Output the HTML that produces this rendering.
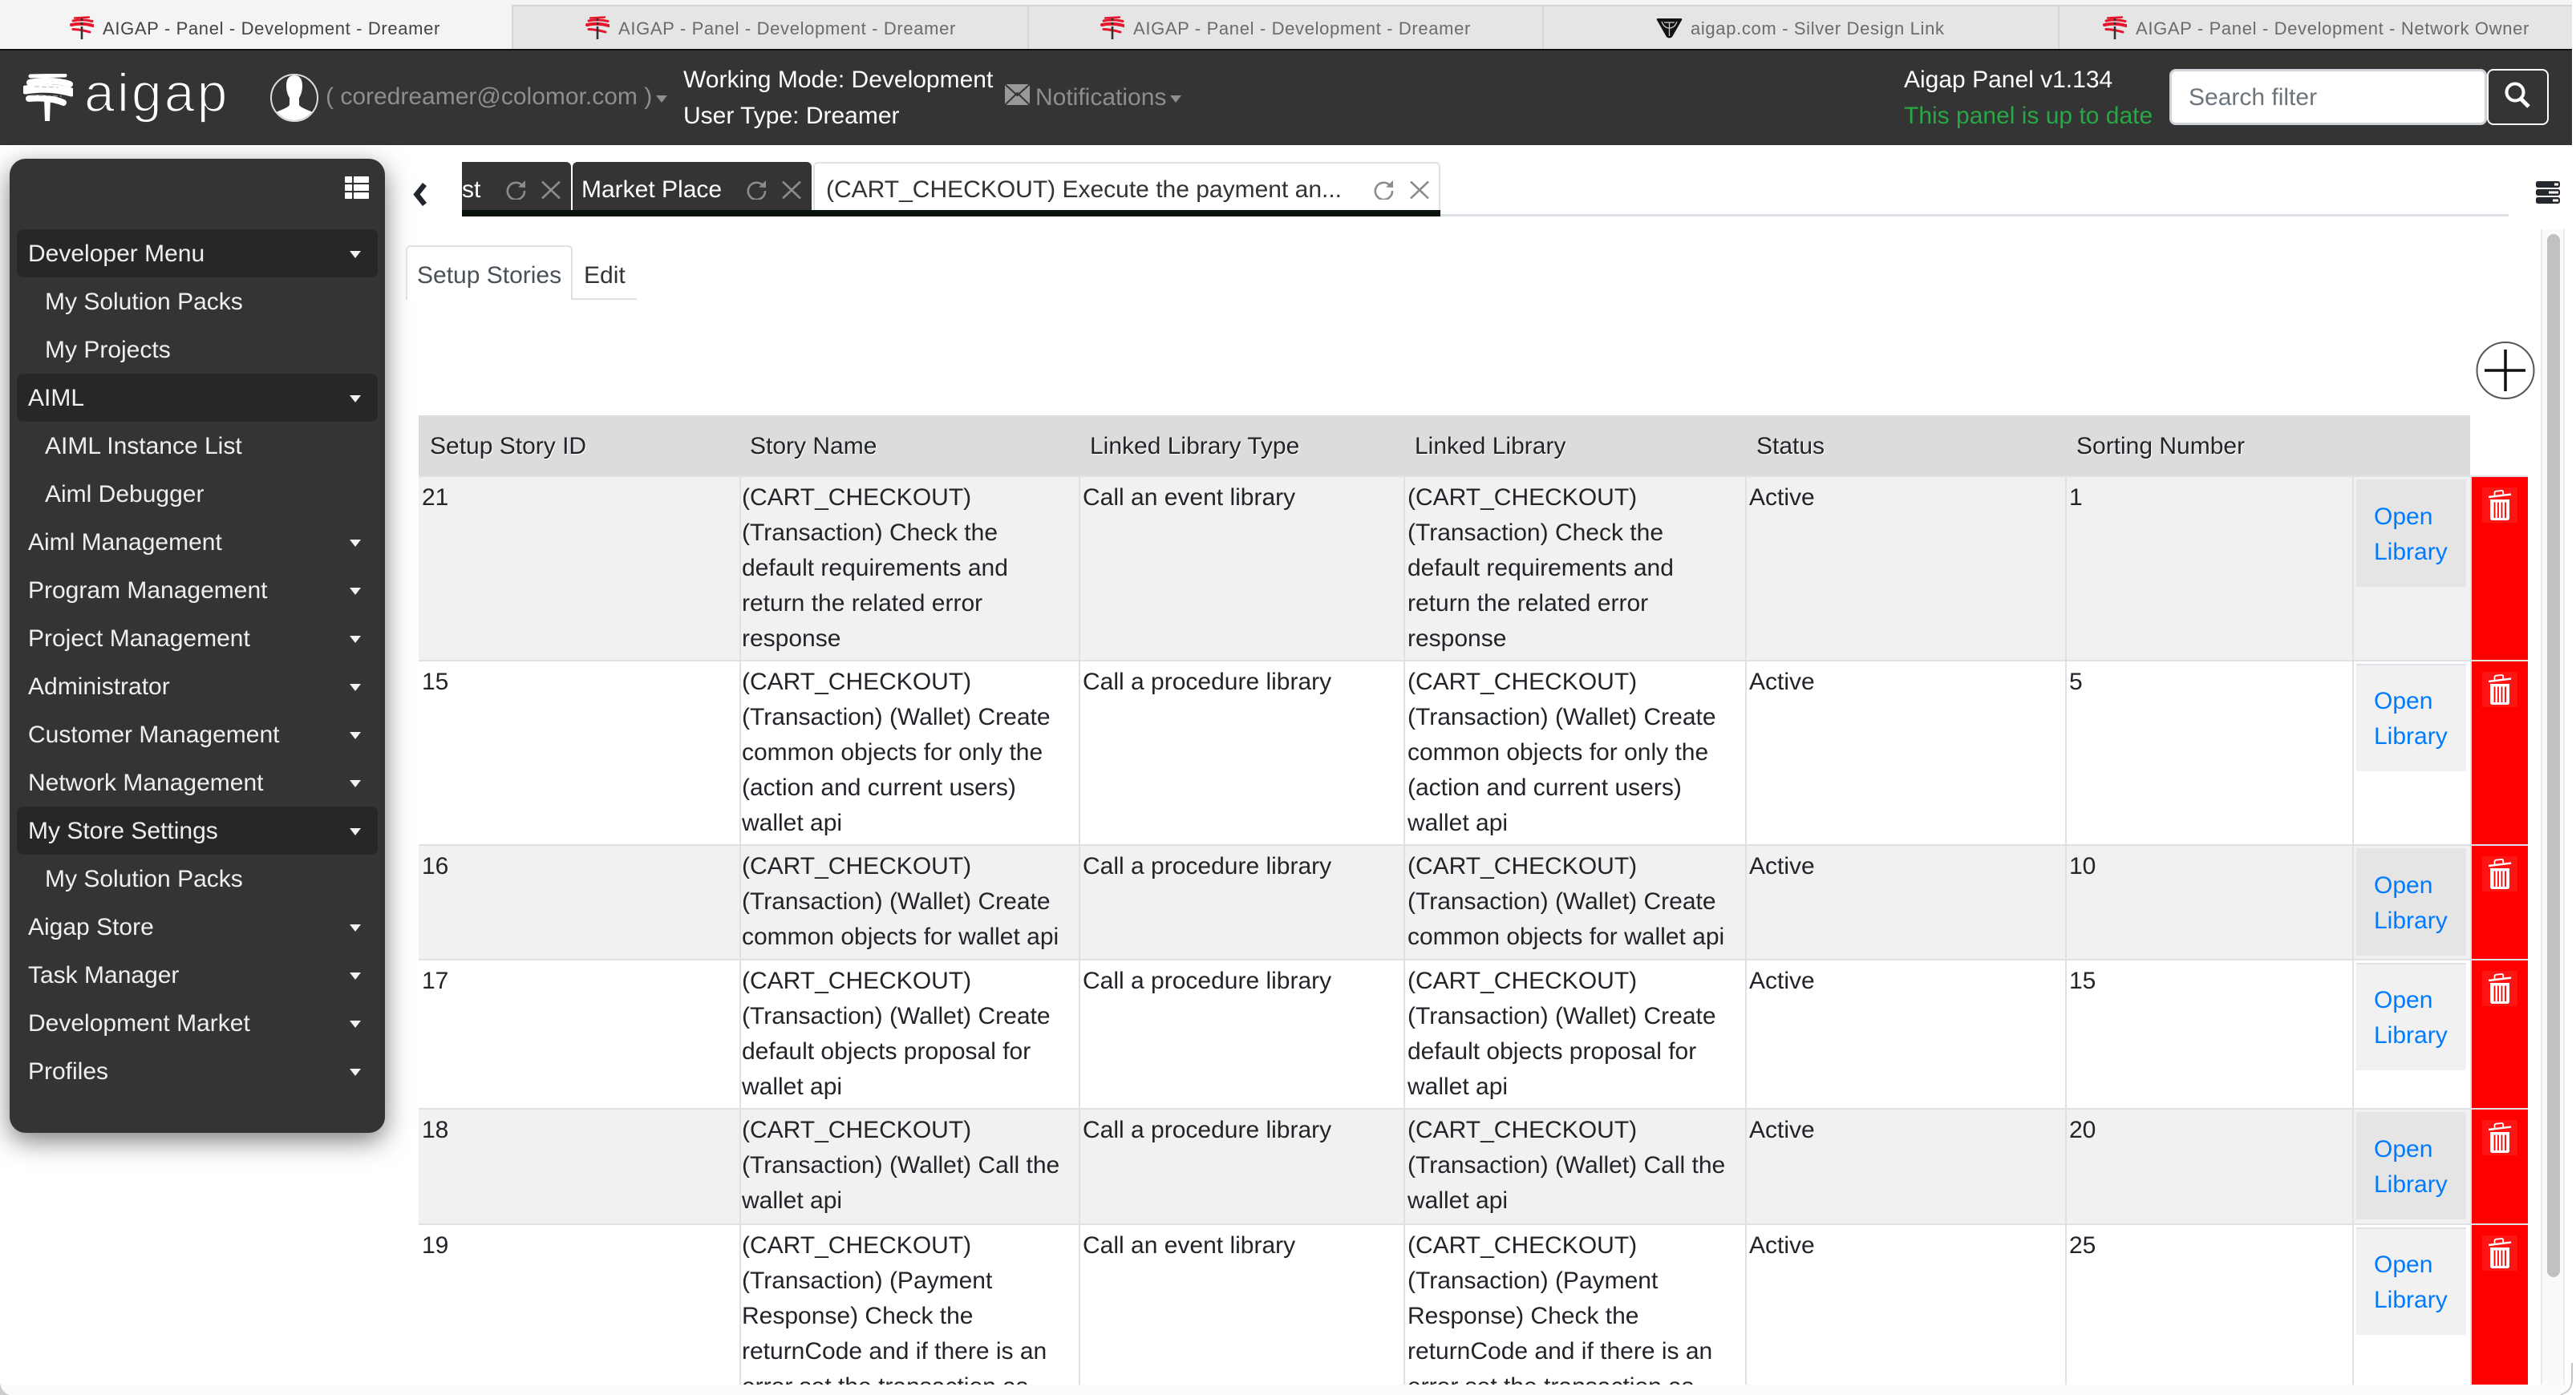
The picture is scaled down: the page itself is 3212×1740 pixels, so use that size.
<!DOCTYPE html>
<html lang="en"><head><meta charset="utf-8"><title>AIGAP - Panel - Development - Dreamer</title>
<style>
*{box-sizing:border-box}
html,body{margin:0;padding:0;width:3212px;height:1740px;overflow:hidden;background:#fff;font-family:"Liberation Sans",sans-serif;font-size:30px;color:#212529}
.a{position:absolute}
.t{position:absolute;white-space:nowrap;line-height:44px;margin-top:2px}
.tab{position:absolute;top:6px;height:56px;background:#e5e5e5;border-left:2px solid #d6d6d6;border-top:2px solid #d4d4d4}
.tt{position:absolute;top:21px;font-size:22px;letter-spacing:.65px;line-height:30px;white-space:nowrap;color:#6b6b6b}
.car{position:absolute;width:0;height:0;margin-top:2px;border-left:7.5px solid transparent;border-right:7.5px solid transparent;border-top:9px solid #f2f2f2}
.m{position:absolute;left:35px;white-space:nowrap;line-height:44px;color:#efefef;margin-top:2px}
.s{left:56px}
.hl{position:absolute;left:21px;width:450px;height:60px;background:#272727;border-radius:8px}
#tw{position:absolute;left:522px;top:518px;width:2630px;height:1209px;overflow:hidden}
table{border-collapse:separate;border-spacing:0;table-layout:fixed;width:2630px;line-height:44px}
th{font-weight:400;text-align:left;background:#dcdcdc;height:75px;padding:17px 0 0 14px;vertical-align:top;text-shadow:1px 1px 1px #fff;white-space:nowrap}
th:nth-child(2){padding-left:13px}
th.n{background:#fff}
td{vertical-align:top;border-top:2px solid #dee2e6;border-left:2px solid #dee2e6;padding:4px 0 0 3px;white-space:nowrap;overflow:hidden}
td:first-child{border-left:0;padding-left:4px}
td:nth-child(2){padding-left:1px}
tr.g td{background:#f1f1f1}
td.lb{padding:3px 5px 0 3px}
.b{display:block;height:134px;padding-top:25px;padding-left:22px;color:#007bff;background:#e5e5e5}
tr.w .b{background:#f1f1f1;border-top:2px solid #dee2e6;padding-top:23px}
tr td.rd,tr.g td.rd{background:#f00;padding:13px 0 0 13px}
.tb{display:block;width:44px;height:44px;background:#ff1414}
</style></head>
<body>
<svg width="0" height="0" style="position:absolute"><defs>
<symbol id="fav" viewBox="0 0 30 30"><g fill="none" stroke="#e5162c" stroke-linecap="round"><path d="M6 2.5 24 1.5" stroke-width="2.4"/><path d="M4 6 Q16 3.5 28 6.5" stroke-width="3"/><path d="M2 11 Q15 8 29 12" stroke-width="4"/><path d="M4 16.5 Q15 17 25 20" stroke-width="3"/></g><path d="M15 3V29" stroke="#333" stroke-width="2.6" stroke-dasharray="3 2 3 2 4 0 20 0"/></symbol>
<symbol id="rf" viewBox="0 0 26 24"><path d="M20.5 5.5A10.6 10.6 0 1 0 24 13" fill="none" stroke="#8c8c8c" stroke-width="2.6"/><path d="M16 8.5 25 9 25 0Z" fill="#8c8c8c"/></symbol>
<symbol id="xx" viewBox="0 0 24 22"><path d="M1 0.5 23 21.5M23 0.5 1 21.5" stroke="#8c8c8c" stroke-width="2.6" fill="none"/></symbol>
<symbol id="tr" viewBox="0 0 44 44"><path d="M8 12 36 8.6" stroke="#fff" stroke-width="2.4" fill="none"/><path d="M15.5 10V6.8Q15.5 5 17.5 4.7L24 4Q26 3.8 26.2 5.6V8.5" stroke="#fff" stroke-width="1.8" fill="none"/><path d="M10 15H34V38Q34 41 31 41H13Q10 41 10 38Z" fill="#fff"/><path d="M15.5 18.500V38M20 18.500V38M24.500 18.500V38M29 18.500V38" stroke="#f00" stroke-width="1.8"/></symbol>
</defs></svg>

<!-- browser tabs -->
<div class="a" style="left:0;top:0;width:3207px;height:62px;background:#f4f4f4"></div>
<div class="tab" style="left:638px;width:643px"></div>
<div class="tab" style="left:1281px;width:642px"></div>
<div class="tab" style="left:1923px;width:643px"></div>
<div class="tab" style="left:2566px;width:641px"></div>
<svg class="a" style="left:87px;top:20px" width="30" height="30"><use href="#fav"/></svg>
<svg class="a" style="left:730px;top:20px" width="30" height="30"><use href="#fav"/></svg>
<svg class="a" style="left:1372px;top:20px" width="30" height="30"><use href="#fav"/></svg>
<svg class="a" style="left:2622px;top:20px" width="30" height="30"><use href="#fav"/></svg>
<svg class="a" style="left:2065px;top:22px" width="33" height="26" viewBox="0 0 33 26"><path d="M2 1H31Q33 1 32 3L20 24Q16.500 27 13 24L1 3Q0 1 2 1Z" fill="#111"/><path d="M7 5Q10 13 16.500 13Q23 13 26 5M10 6H23M16.500 6V23" stroke="#ccc" stroke-width="1.3" fill="none"/></svg>
<div class="tt" style="left:128px;color:#444">AIGAP - Panel - Development - Dreamer</div>
<div class="tt" style="left:771px">AIGAP - Panel - Development - Dreamer</div>
<div class="tt" style="left:1413px">AIGAP - Panel - Development - Dreamer</div>
<div class="tt" style="left:2108px">aigap.com - Silver Design Link</div>
<div class="tt" style="left:2663px">AIGAP - Panel - Development - Network Owner</div>

<!-- header -->
<div class="a" style="left:0;top:61px;width:3207px;height:120px;background:#343434;border-top:2px solid #111"></div>
<svg class="a" style="left:29px;top:92px" width="62" height="60" viewBox="0 0 62 60"><g fill="none" stroke="#fff" stroke-linecap="round"><path d="M9 3 52 2" stroke-width="5"/><path d="M8 11Q36 6 58 13" stroke-width="8"/><path d="M3 20Q32 15 60 23" stroke-width="11"/><path d="M7 31Q34 29 50 36" stroke-width="8"/></g><path d="M26 30H34L33 59H27Z" fill="#fff"/><path d="M14 16 44 17M10 27 48 28" stroke="#bbb" stroke-width="1" stroke-dasharray="6 3"/></svg>
<div class="a" style="left:105px;top:76px;font-size:68px;line-height:80px;letter-spacing:3px;color:#fff;-webkit-text-stroke:1.8px #343434;white-space:nowrap">aigap</div>
<svg class="a" style="left:336px;top:91px" width="62" height="62" viewBox="0 0 62 62"><defs><clipPath id="cc"><circle cx="31" cy="31" r="28"/></clipPath></defs><g clip-path="url(#cc)"><path d="M31 3C24 3 21 8 21 16C21 23 23 28 25 31V39C25 42 20 44 8 49V62H54V49C42 44 37 42 37 39V31C39 28 41 23 41 16C41 8 38 3 31 3Z" fill="#fff"/></g><circle cx="31" cy="31" r="29" fill="none" stroke="#ddd" stroke-width="2"/></svg>
<div class="t" style="left:406px;top:97px;color:#8e8e8e">( coredreamer@colomor.com )</div>
<div class="car" style="left:818px;top:117px;border-top-color:#8e8e8e"></div>
<div class="t" style="left:852px;top:76px;color:#fff">Working Mode: Development</div>
<div class="t" style="left:852px;top:121px;color:#fff">User Type: Dreamer</div>
<svg class="a" style="left:1253px;top:105px" width="31" height="26" viewBox="0 0 31 26"><rect width="31" height="26" fill="#999"/><path d="M0 0 15.500 14 31 0M0 26 15.500 11 31 26" fill="none" stroke="#343434" stroke-width="2"/></svg>
<div class="t" style="left:1291px;top:98px;color:#8e8e8e">Notifications</div>
<div class="car" style="left:1459px;top:117px;border-top-color:#8e8e8e"></div>
<div class="t" style="left:2374px;top:76px;color:#fff">Aigap Panel v1.134</div>
<div class="t" style="left:2374px;top:121px;color:#28a745">This panel is up to date</div>
<div class="a" style="left:2705px;top:86px;width:396px;height:70px;background:#fff;border:3px solid #ced4da;border-radius:8px"></div>
<div class="t" style="left:2729px;top:98px;color:#6c757d">Search filter</div>
<div class="a" style="left:3101px;top:86px;width:77px;height:70px;border:2px solid #fff;border-radius:8px"></div>
<svg class="a" style="left:3122px;top:101px" width="36" height="34" viewBox="0 0 36 34"><circle cx="14" cy="14" r="10.500" fill="none" stroke="#fff" stroke-width="4"/><path d="M21 22 31 32" stroke="#fff" stroke-width="5"/></svg>

<!-- sidebar -->
<div class="a" style="left:12px;top:198px;width:468px;height:1215px;background:#343434;border-radius:20px;box-shadow:0 10px 32px rgba(0,0,0,.5)"></div>
<svg class="a" style="left:430px;top:220px" width="30" height="28" viewBox="0 0 30 28" fill="#fff"><rect width="9" height="8" rx="1"/><rect x="11" width="19" height="8" rx="1"/><rect y="10" width="9" height="8" rx="1"/><rect x="11" y="10" width="19" height="8" rx="1"/><rect y="20" width="9" height="8" rx="1"/><rect x="11" y="20" width="19" height="8" rx="1"/></svg>
<div class="hl" style="top:286px"></div><div class="hl" style="top:466px"></div><div class="hl" style="top:1006px"></div>
<div class="m" style="top:293px">Developer Menu</div><div class="car" style="left:436px;top:311px"></div>
<div class="m s" style="top:353px">My Solution Packs</div>
<div class="m s" style="top:413px">My Projects</div>
<div class="m" style="top:473px">AIML</div><div class="car" style="left:436px;top:491px"></div>
<div class="m s" style="top:533px">AIML Instance List</div>
<div class="m s" style="top:593px">Aiml Debugger</div>
<div class="m" style="top:653px">Aiml Management</div><div class="car" style="left:436px;top:671px"></div>
<div class="m" style="top:713px">Program Management</div><div class="car" style="left:436px;top:731px"></div>
<div class="m" style="top:773px">Project Management</div><div class="car" style="left:436px;top:791px"></div>
<div class="m" style="top:833px">Administrator</div><div class="car" style="left:436px;top:851px"></div>
<div class="m" style="top:893px">Customer Management</div><div class="car" style="left:436px;top:911px"></div>
<div class="m" style="top:953px">Network Management</div><div class="car" style="left:436px;top:971px"></div>
<div class="m" style="top:1013px">My Store Settings</div><div class="car" style="left:436px;top:1031px"></div>
<div class="m s" style="top:1073px">My Solution Packs</div>
<div class="m" style="top:1133px">Aigap Store</div><div class="car" style="left:436px;top:1151px"></div>
<div class="m" style="top:1193px">Task Manager</div><div class="car" style="left:436px;top:1211px"></div>
<div class="m" style="top:1253px">Development Market</div><div class="car" style="left:436px;top:1271px"></div>
<div class="m" style="top:1313px">Profiles</div><div class="car" style="left:436px;top:1331px"></div>

<!-- inner tabs -->
<svg class="a" style="left:514px;top:228px" width="20" height="29" viewBox="0 0 20 29"><path d="M15.500 2 5.500 14.500 15.500 27" fill="none" stroke="#23282f" stroke-width="6.500"/></svg>
<div class="a" style="left:1796px;top:267px;width:1332px;height:3px;background:#dee2e6"></div>
<div class="a" style="left:576px;top:202px;width:136px;height:60px;background:#343434;border-top-right-radius:6px"></div>
<div class="a" style="left:714px;top:202px;width:298px;height:60px;background:#343434;border-radius:6px 6px 0 0"></div>
<div class="a" style="left:1014px;top:202px;width:782px;height:62px;background:#fff;border:2px solid #dee2e6;border-bottom:0;border-radius:6px 6px 0 0"></div>
<div class="a" style="left:576px;top:262px;width:1220px;height:8px;background:#0a140a"></div>
<div class="t" style="left:576px;top:213px;color:#fff">st</div>
<div class="t" style="left:725px;top:213px;color:#fff">Market Place</div>
<div class="t" style="left:1030px;top:213px;color:#333">(CART_CHECKOUT) Execute the payment an...</div>
<svg class="a" style="left:630px;top:225px" width="26" height="24"><use href="#rf"/></svg>
<svg class="a" style="left:675px;top:226px" width="24" height="22"><use href="#xx"/></svg>
<svg class="a" style="left:930px;top:225px" width="26" height="24"><use href="#rf"/></svg>
<svg class="a" style="left:975px;top:226px" width="24" height="22"><use href="#xx"/></svg>
<svg class="a" style="left:1712px;top:225px" width="26" height="24"><use href="#rf"/></svg>
<svg class="a" style="left:1758px;top:226px" width="24" height="22"><use href="#xx"/></svg>

<svg class="a" style="left:3162px;top:226px" width="30" height="28" viewBox="0 0 30 28"><rect width="30" height="8" rx="2.500" fill="#23282f"/><rect y="10" width="30" height="8" rx="2.500" fill="#23282f"/><rect y="20" width="30" height="8" rx="2.500" fill="#23282f"/><rect x="23" y="2.500" width="5" height="3" fill="#fff"/><rect x="16" y="12.500" width="12" height="3" fill="#fff"/><rect x="21" y="22.500" width="7" height="3" fill="#fff"/></svg>

<!-- sub tabs -->
<div class="a" style="left:506px;top:306px;width:208px;height:68px;border:2px solid #dee2e6;border-bottom:0;border-radius:6px 6px 0 0;background:#fff"></div>
<div class="a" style="left:712px;top:372px;width:82px;height:2px;background:#dee2e6"></div>
<div class="t" style="left:520px;top:320px;color:#495057">Setup Stories</div>
<div class="t" style="left:728px;top:320px;color:#333">Edit</div>

<svg class="a" style="left:3086px;top:425px" width="76" height="74" viewBox="0 0 76 74"><ellipse cx="38" cy="37" rx="35.500" ry="35" fill="#fff" stroke="#555" stroke-width="2"/><path d="M12 37H63M38 11V63" stroke="#111" stroke-width="3.500"/></svg>

<!-- table -->
<div id="tw"><table>
<colgroup><col style="width:400px"><col style="width:423px"><col style="width:405px"><col style="width:426px"><col style="width:399px"><col style="width:358px"><col style="width:147px"><col style="width:72px"></colgroup>
<tr><th>Setup Story ID</th><th>Story Name</th><th>Linked Library Type</th><th>Linked Library</th><th>Status</th><th>Sorting Number</th><th></th><th class="n"></th></tr>
<tr class="g" style="height:230px"><td>21</td><td>(CART_CHECKOUT)<br>(Transaction) Check the<br>default requirements and<br>return the related error<br>response</td><td>Call an event library</td><td>(CART_CHECKOUT)<br>(Transaction) Check the<br>default requirements and<br>return the related error<br>response</td><td>Active</td><td>1</td><td class="lb"><span class="b">Open<br>Library</span></td><td class="rd"><span class="tb"><svg width="44" height="44"><use href="#tr"/></svg></span></td></tr>
<tr class="w" style="height:230px"><td>15</td><td>(CART_CHECKOUT)<br>(Transaction) (Wallet) Create<br>common objects for only the<br>(action and current users)<br>wallet api</td><td>Call a procedure library</td><td>(CART_CHECKOUT)<br>(Transaction) (Wallet) Create<br>common objects for only the<br>(action and current users)<br>wallet api</td><td>Active</td><td>5</td><td class="lb"><span class="b">Open<br>Library</span></td><td class="rd"><span class="tb"><svg width="44" height="44"><use href="#tr"/></svg></span></td></tr>
<tr class="g" style="height:143px"><td>16</td><td>(CART_CHECKOUT)<br>(Transaction) (Wallet) Create<br>common objects for wallet api</td><td>Call a procedure library</td><td>(CART_CHECKOUT)<br>(Transaction) (Wallet) Create<br>common objects for wallet api</td><td>Active</td><td>10</td><td class="lb"><span class="b">Open<br>Library</span></td><td class="rd"><span class="tb"><svg width="44" height="44"><use href="#tr"/></svg></span></td></tr>
<tr class="w" style="height:186px"><td>17</td><td>(CART_CHECKOUT)<br>(Transaction) (Wallet) Create<br>default objects proposal for<br>wallet api</td><td>Call a procedure library</td><td>(CART_CHECKOUT)<br>(Transaction) (Wallet) Create<br>default objects proposal for<br>wallet api</td><td>Active</td><td>15</td><td class="lb"><span class="b">Open<br>Library</span></td><td class="rd"><span class="tb"><svg width="44" height="44"><use href="#tr"/></svg></span></td></tr>
<tr class="g" style="height:144px"><td>18</td><td>(CART_CHECKOUT)<br>(Transaction) (Wallet) Call the<br>wallet api</td><td>Call a procedure library</td><td>(CART_CHECKOUT)<br>(Transaction) (Wallet) Call the<br>wallet api</td><td>Active</td><td>20</td><td class="lb"><span class="b">Open<br>Library</span></td><td class="rd"><span class="tb"><svg width="44" height="44"><use href="#tr"/></svg></span></td></tr>
<tr class="w" style="height:230px"><td>19</td><td>(CART_CHECKOUT)<br>(Transaction) (Payment<br>Response) Check the<br>returnCode and if there is an<br>error set the transaction as</td><td>Call an event library</td><td>(CART_CHECKOUT)<br>(Transaction) (Payment<br>Response) Check the<br>returnCode and if there is an<br>error set the transaction as</td><td>Active</td><td>25</td><td class="lb"><span class="b">Open<br>Library</span></td><td class="rd"><span class="tb"><svg width="44" height="44"><use href="#tr"/></svg></span></td></tr>
</table></div>

<!-- scrollbar -->
<div class="a" style="left:3168px;top:286px;width:30px;height:1441px;background:#fafafa;border-left:2px solid #e8e8e8;border-right:2px solid #ececec"></div>
<div class="a" style="left:3176px;top:292px;width:16px;height:1301px;background:#c1c1c1;border-radius:8px"></div>
<!-- bottom strip + window corners -->
<div class="a" style="left:0;top:1727px;width:3200px;height:13px;background:#fbfbfb"></div>
<svg class="a" style="left:0;top:0" width="3212" height="1740" viewBox="0 0 3212 1740" fill="none"><path d="M3207 1700V1722Q3207 1735 3193 1740L3212 1740" stroke="#c4c4c4" stroke-width="2"/><path d="M3208 1722Q3207 1736 3194 1740H3212V1722Z" fill="#fff" stroke="none"/><path d="M0 1725Q2 1737 12 1740H0Z" fill="#ccc"/></svg>
</body></html>
